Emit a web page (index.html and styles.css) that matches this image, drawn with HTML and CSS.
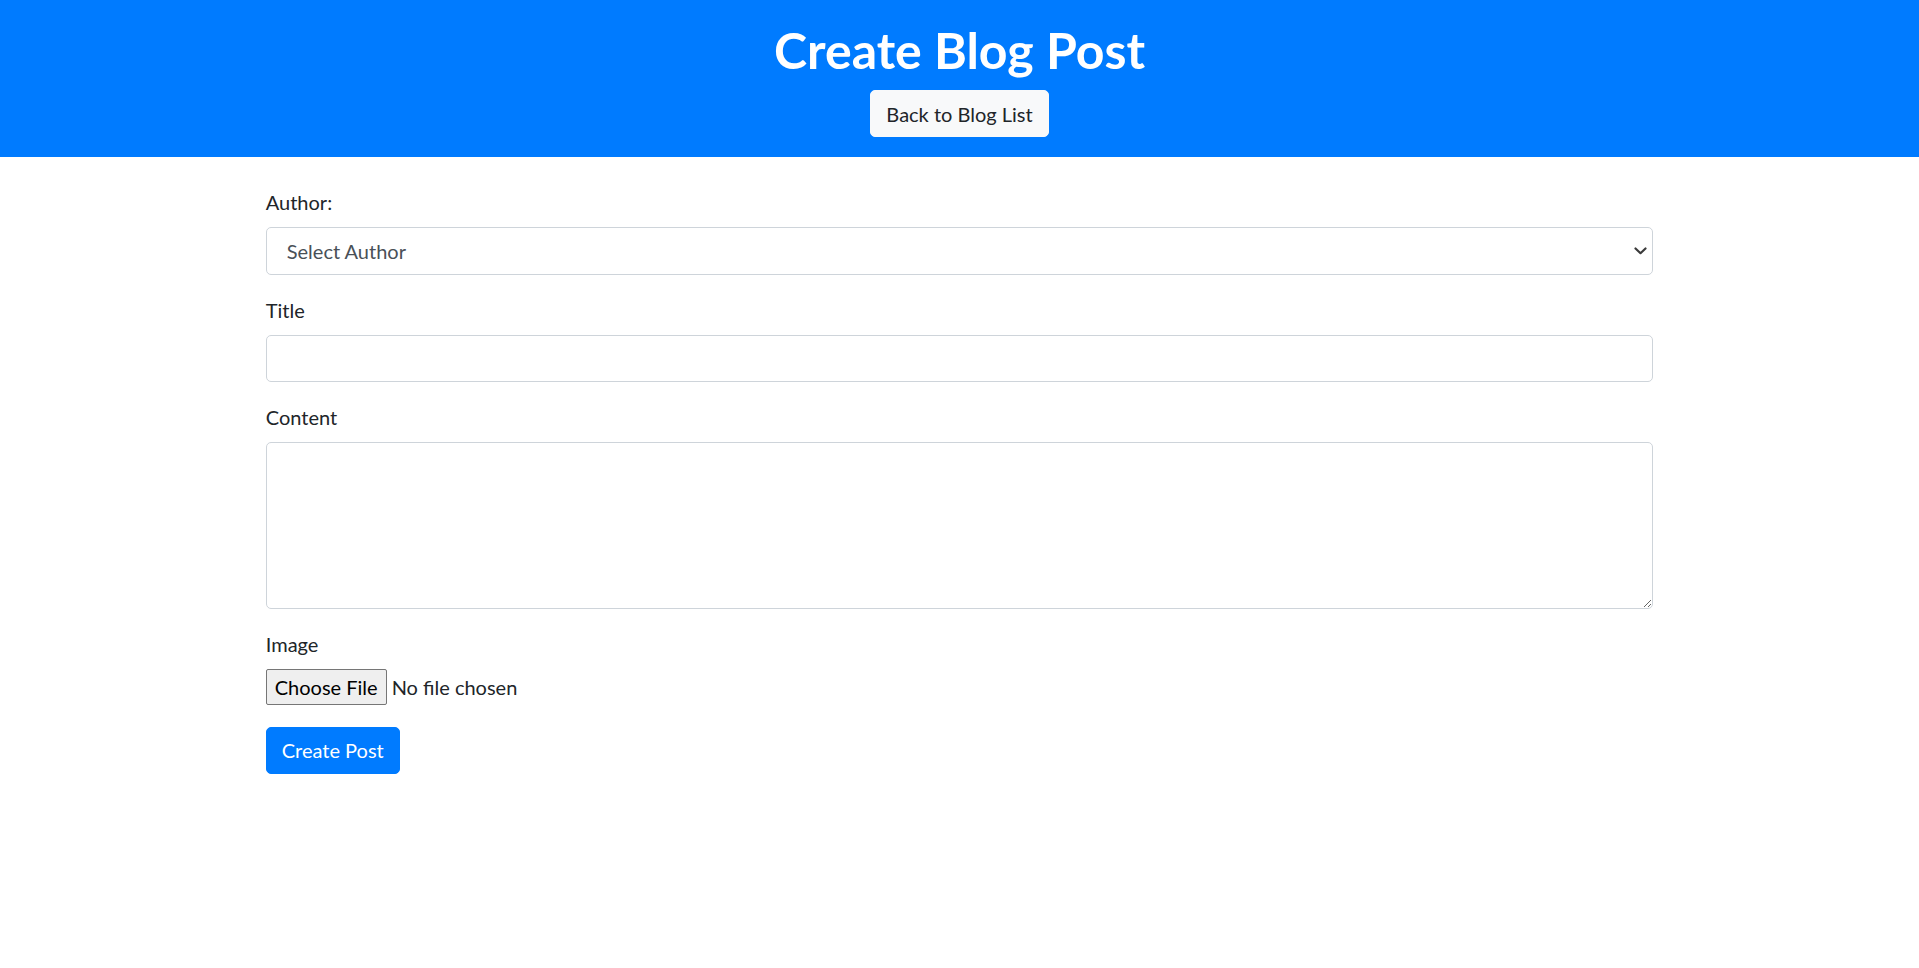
FILE: index.html
```html
<!DOCTYPE html>
<html lang="en">
<head>
<meta charset="utf-8">
<title>Create Blog Post</title>
<link rel="stylesheet" href="styles.css">
</head>
<body>
<header class="site-header">
  <h1 class="site-title">Create Blog Post</h1>
  <a class="btn btn-light" href="#">Back to Blog List</a>
</header>
<main class="container">
  <form class="post-form">
    <div class="form-group">
      <label class="form-label" for="author">Author:</label>
      <div class="select-wrap">
        <select id="author" class="form-control form-select">
          <option>Select Author</option>
        </select>
        <svg class="select-arrow" width="13" height="8" viewBox="0 0 13 8" aria-hidden="true"><path d="M1.5 1.5 L6.5 6.2 L11.5 1.5" fill="none" stroke="#3b3b3b" stroke-width="2.2" stroke-linecap="round" stroke-linejoin="round"/></svg>
      </div>
    </div>
    <div class="form-group">
      <label class="form-label" for="title">Title</label>
      <input id="title" class="form-control" type="text">
    </div>
    <div class="form-group">
      <label class="form-label" for="content">Content</label>
      <textarea id="content" class="form-control form-textarea"></textarea>
    </div>
    <div class="form-group">
      <label class="form-label" for="image">Image</label>
      <input id="image" class="form-file" type="file">
    </div>
    <button type="submit" class="btn btn-primary">Create Post</button>
  </form>
</main>
</body>
</html>
```
FILE: styles.css
```css
* { box-sizing: border-box; }
html, body { margin: 0; padding: 0; }
body {
  font-family: Lato, "Liberation Sans", sans-serif;
  font-size: 20px;
  line-height: 1.5;
  color: #212529;
  background: #fff;
}
.site-header {
  background: #007bff;
  color: #fff;
  padding: 20px 0;
  display: flex;
  flex-direction: column;
  align-items: center;
}
.site-title {
  margin: 0 0 10px;
  font-size: 50px;
  line-height: 60px;
  font-weight: 700;
}
.btn {
  display: inline-block;
  font-family: inherit;
  font-size: 20px;
  line-height: 30px;
  padding: 7.5px 15px;
  border: 1px solid transparent;
  border-radius: 5px;
  text-decoration: none;
  cursor: pointer;
}
.btn-light {
  background: #f8f9fa;
  border-color: #f8f9fa;
  color: #212529;
}
.btn-primary {
  background: #007bff;
  border-color: #007bff;
  color: #fff;
}
.container {
  max-width: 1387.5px;
  margin: 30px auto 0;
}
.form-group { margin-bottom: 20px; }
.form-label {
  display: inline-block;
  margin-bottom: 10px;
}
.form-control {
  display: block;
  width: 100%;
  height: 47.5px;
  padding: 7.5px 15px;
  font-family: inherit;
  font-size: 20px;
  line-height: 30px;
  color: #495057;
  background: #fff;
  border: 1px solid #ced4da;
  border-radius: 5px;
  outline: none;
}
.select-wrap { position: relative; }
.form-select {
  appearance: none;
  -webkit-appearance: none;
  padding-left: 20px;
}
.select-arrow {
  position: absolute;
  right: 6px;
  top: 20px;
  pointer-events: none;
}
.form-textarea {
  height: 166.5px;
  resize: vertical;
}
.form-file {
  display: flex;
  align-items: center;
  width: 100%;
  height: 38px;
  font-family: inherit;
  font-size: 20px;
  line-height: 30px;
  color: #212529;
}
.form-file::file-selector-button {
  font-family: inherit;
  font-size: 20px;
  line-height: 30px;
  height: 36px;
  padding: 2px 8px;
  margin-right: 5px;
  color: #000;
  background: #efefef;
  border: 1px solid #767676;
  border-radius: 2px;
}
```
